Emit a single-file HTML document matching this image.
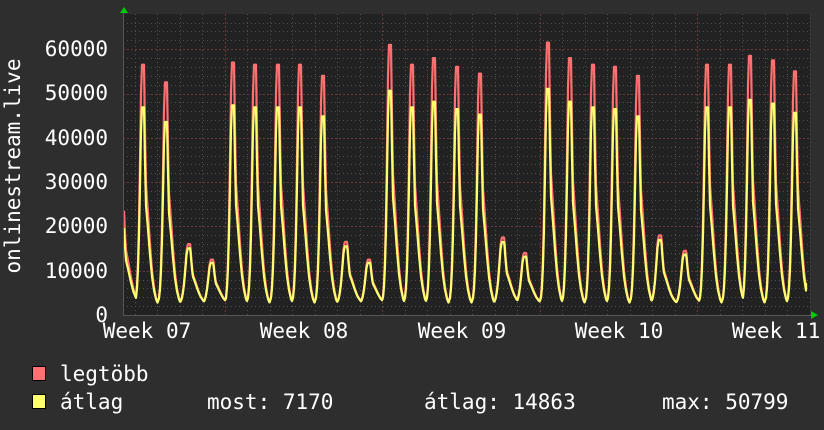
<!DOCTYPE html>
<html><head><meta charset="utf-8"><style>
html,body{margin:0;padding:0;background:#2e2e2e;width:824px;height:430px;overflow:hidden}
svg{display:block}
text{font-family:"DejaVu Sans Mono","Liberation Mono",monospace;fill:#fff;font-size:21px}
</style></head><body>
<svg id="s" width="824" height="430" xmlns="http://www.w3.org/2000/svg">
<rect width="824" height="430" fill="#2e2e2e"/>
<rect x="123" y="14" width="687" height="301" fill="#222"/>
<g id="grid"></g>
<path id="red" fill="none" stroke="#ff7070" stroke-width="2.2" stroke-linejoin="round"/>
<path id="yel" fill="none" stroke="#ffff70" stroke-width="2.2" stroke-linejoin="round"/>
<line x1="123" y1="315.5" x2="812" y2="315.5" stroke="#555" stroke-width="1"/>
<line x1="123.5" y1="12" x2="123.5" y2="315" stroke="#555" stroke-width="1"/>
<polygon points="120,13 128,13 124,7" fill="#00cc00"/>
<polygon points="811,311 811,319 818,315" fill="#00cc00"/>
<g text-anchor="end">
<text x="108" y="56">60000</text>
<text x="108" y="100">50000</text>
<text x="108" y="145">40000</text>
<text x="108" y="189">30000</text>
<text x="108" y="233">20000</text>
<text x="108" y="278">10000</text>
<text x="108" y="322">0</text>
</g>
<text transform="translate(20,166) rotate(-90)" text-anchor="middle">onlinestream.live</text>
<g text-anchor="middle">
<text x="147" y="338">Week 07</text>
<text x="304" y="338">Week 08</text>
<text x="462" y="338">Week 09</text>
<text x="619" y="338">Week 10</text>
<text x="776" y="338">Week 11</text>
</g>
<rect x="32.5" y="366.5" width="13" height="14" fill="#ff7070" stroke="#000" stroke-width="1"/>
<rect x="32.5" y="394.5" width="13" height="14" fill="#ffff70" stroke="#000" stroke-width="1"/>
<text x="60" y="381">legtöbb</text>
<text x="60" y="409">átlag</text>
<text x="207" y="409">most: 7170</text>
<text x="424" y="409">átlag: 14863</text>
<text x="662" y="409">max: 50799</text>
</svg>
<script>
(function(){
var g=document.getElementById('grid'),h='';
var y0=315,k=44.3/10000;
for(var v=2000;v<=66000;v+=2000){var y=y0-v*k;if(y<14)break;
 var maj=v%10000==0;
 h+='<line x1="123" x2="810" y1="'+(Math.round(y)+.5)+'" y2="'+(Math.round(y)+.5)+'" stroke="'+(maj?'#6a3a3a':'#505050')+'" stroke-dasharray="'+(maj?'2,2':'1,3')+'"/>';}
for(var x=134.5;x<810;x+=22.5){
 var maj=[224,382,539,697].some(function(m){return Math.abs(m-x)<3});
 var xx=Math.round(x)+.5;
 h+='<line y1="14" y2="315" x1="'+xx+'" x2="'+xx+'" stroke="'+(maj?'#6a3a3a':'#505050')+'" stroke-dasharray="'+(maj?'2,2':'1,3')+'"/>';}
g.innerHTML=h;
var P=[[143,56.5],[166,52.5],[189,16],[212,12.5],[233,57],[255,56.5],[278,56.5],[300,56.5],[323,54],[346,16.5],[369,12.5],[390,61],[412,56.5],[434,58],[457,56],[480,54.5],[503,17.5],[525,14],[548,61.5],[570,58],[593,56.5],[615,56],[638,54],[660,18],[685,14.5],[707,56.5],[730,56.5],[750,58.5],[773,57.5],[795,55]];
var prof=[[-9,0],[-7,0.03],[-6,0.08],[-5,0.18],[-4,0.35],[-3,0.6],[-2,0.88],[-1,1],[1,1],[2,0.72],[3,0.5],[5,0.38],[7,0.25],[9,0.14],[11,0.07],[13,0.025],[15,0]];
function f(d){if(d<=-9||d>=15)return 0;for(var i=1;i<prof.length;i++){if(d<=prof[i][0]){var a=prof[i-1],b=prof[i];return a[1]+(b[1]-a[1])*(d-a[0])/(b[0]-a[0]);}}return 0;}
function val(x,ratio){var t=2500,s=0;
 for(var i=0;i<P.length;i++){var d=x-P[i][0],pk=P[i][1]*1000;var big=pk>30000;var pv=big?pk*ratio:pk*(ratio<1?0.94:1);
  var dd=big?d:d*0.8;
  s=Math.max(s,(pv-t)*f(dd));}
 var v=t+s;if(x<140)v=Math.max(v,t+(27000*ratio-t)*f((x-124)*0.8+1.5));return v;}
function path(r){var d='';for(var x=124;x<=806;x+=0.5){var y=315-val(x,r)*k;d+=(x==124?'M':'L')+x+','+y.toFixed(1);}
 d+='L806,'+(315-7200*k).toFixed(1);return d;}
document.getElementById('red').setAttribute('d',path(1));
document.getElementById('yel').setAttribute('d',path(0.83));
})();
</script>
</body></html>
